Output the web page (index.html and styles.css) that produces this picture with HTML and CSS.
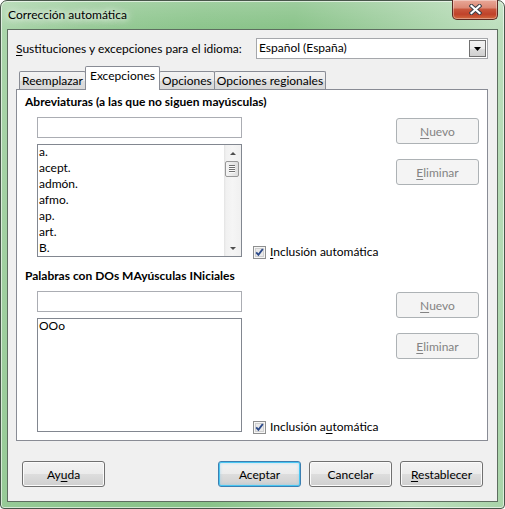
FILE: index.html
```html
<!DOCTYPE html>
<html>
<head>
    <title>Corrección automática</title>
    <link rel="stylesheet" href="styles.css">
</head>
<body>
    <div class="window">
        <div class="titlebar">
            <span class="title">Corrección automática</span>
            <button class="close-btn">
                <svg width="13" height="11" viewBox="0 0 13 11">
                    <path d="M2.5 2 L10.5 9 M10.5 2 L2.5 9" stroke="#3b4048" stroke-width="4.2" stroke-linecap="square" fill="none"/>
                    <path d="M2.5 2 L10.5 9 M10.5 2 L2.5 9" stroke="#fff" stroke-width="2.2" stroke-linecap="square" fill="none"/>
                </svg>
            </button>
        </div>

        <div class="client">
            <div class="lang-row">
                <label class="lang-label"><u>S</u>ustituciones y excepciones para el idioma:</label>
                <div class="combo">
                    <span class="combo-text">Español (España)</span>
                    <span class="combo-btn">
                        <svg width="7" height="4" viewBox="0 0 7 4"><path d="M0 0 H7 L3.5 4 Z" fill="#000"/></svg>
                    </span>
                </div>
            </div>

            <div class="tabs">
                <div class="tab">Reemplazar</div>
                <div class="tab active">Excepciones</div>
                <div class="tab">Opciones</div>
                <div class="tab">Opciones regionales</div>
            </div>

            <div class="panel">
                <section class="group">
                    <h2 class="group-title">Abreviaturas (a las que no siguen mayúsculas)</h2>
                    <div class="group-body">
                        <div class="field"></div>
                        <div class="listbox short">
                            <ul class="items">
                                <li>a.</li>
                                <li>acept.</li>
                                <li>admón.</li>
                                <li>afmo.</li>
                                <li>ap.</li>
                                <li>art.</li>
                                <li>B.</li>
                            </ul>
                            <div class="vscroll">
                                <span class="sb-arrow sb-up"></span>
                                <span class="sb-thumb"></span>
                                <span class="sb-track"></span>
                                <span class="sb-arrow sb-down"></span>
                            </div>
                        </div>
                        <label class="check">
                            <svg width="13" height="13" viewBox="0 0 13 13">
                                <rect x="0.5" y="0.5" width="12" height="12" fill="#f6f6f6" stroke="#8e8f8f"/>
                                <rect x="2.5" y="2.5" width="8" height="8" fill="#e9e9e9" stroke="#cfcfcf"/>
                                <path d="M3.2 6.4 L5.4 8.8 L9.8 3" stroke="#2c4a8a" stroke-width="1.9" fill="none"/>
                            </svg>
                            <span><u>I</u>nclusión automática</span>
                        </label>
                        <div class="side-btns">
                            <button class="btn" disabled><u>N</u>uevo</button>
                            <button class="btn" disabled><u>E</u>liminar</button>
                        </div>
                    </div>
                </section>

                <section class="group second">
                    <h2 class="group-title">Palabras con DOs MAyúsculas INiciales</h2>
                    <div class="group-body">
                        <div class="field"></div>
                        <div class="listbox tall">
                            <ul class="items">
                                <li>OOo</li>
                            </ul>
                        </div>
                        <label class="check">
                            <svg width="13" height="13" viewBox="0 0 13 13">
                                <rect x="0.5" y="0.5" width="12" height="12" fill="#f6f6f6" stroke="#8e8f8f"/>
                                <rect x="2.5" y="2.5" width="8" height="8" fill="#e9e9e9" stroke="#cfcfcf"/>
                                <path d="M3.2 6.4 L5.4 8.8 L9.8 3" stroke="#2c4a8a" stroke-width="1.9" fill="none"/>
                            </svg>
                            <span>Inclusión a<u>u</u>tomática</span>
                        </label>
                        <div class="side-btns">
                            <button class="btn" disabled><u>N</u>uevo</button>
                            <button class="btn" disabled><u>E</u>liminar</button>
                        </div>
                    </div>
                </section>
            </div>

            <div class="footer">
                <button class="btn help">Ay<u>u</u>da</button>
                <button class="btn default">Aceptar</button>
                <button class="btn">Cancelar</button>
                <button class="btn"><u>R</u>establecer</button>
            </div>
        </div>
    </div>
</body>
</html>
```

FILE: styles.css
```css
* {
    box-sizing: border-box;
}

body {
    margin: 0;
    font-family: Lato, "Noto Sans", sans-serif;
    font-size: 12px;
    color: #000;
    background: #fff;
}

u {
    text-decoration-thickness: 1px;
    text-underline-offset: 2px;
}

/* aero frame */
.window {
    width: 505px;
    height: 509px;
    display: flex;
    flex-direction: column;
    padding: 0 6px 6px 6px;
    border: 1px solid #48564a;
    border-radius: 7px 7px 4px 4px;
    background:
        linear-gradient(180deg, rgba(255, 255, 255, 0.18) 0, rgba(255, 255, 255, 0) 28px),
        linear-gradient(100deg, #acd6ac 0%, #96ca96 16%, #8cc58c 34%, #89c389 50%, #a1cfa1 66%, #bddfbd 84%, #a9d4a9 100%);
    box-shadow: inset 0 0 0 1px rgba(255, 255, 255, 0.6);
}

.titlebar {
    height: 28px;
    display: flex;
    justify-content: space-between;
    align-items: flex-start;
}

.title {
    margin: 6px 0 0 1px;
    line-height: 16px;
    text-shadow: 0 0 6px #fff, 0 0 10px rgba(255, 255, 255, 0.9), 0 0 16px rgba(255, 255, 255, 0.7);
}

.close-btn {
    width: 46px;
    height: 20px;
    margin-top: -1px;
    padding: 0;
    display: flex;
    align-items: center;
    justify-content: center;
    border: 1px solid #5b2a22;
    border-top: none;
    border-radius: 0 0 5px 5px;
    background: linear-gradient(180deg, #e9a898 0%, #dc8a76 40%, #c8553b 50%, #c0422a 75%, #d2693e 100%);
    box-shadow: inset 0 0 0 1px rgba(255, 255, 255, 0.35);
}

/* dialog body */
.client {
    flex: 1;
    display: flex;
    flex-direction: column;
    padding: 8px 9px 14px 8px;
    border: 1px solid #5e6e60;
    background: #f0f0f0;
}

.lang-row {
    height: 21px;
    display: flex;
    justify-content: space-between;
    align-items: center;
    white-space: nowrap;
}

.combo {
    width: 232px;
    height: 21px;
    display: flex;
    align-items: stretch;
    border: 1px solid #a5a7ab;
    background: #fff;
}

.combo-text {
    flex: 1;
    padding-left: 2px;
    line-height: 18px;
}

.combo-btn {
    width: 17px;
    margin: 1px;
    display: flex;
    align-items: center;
    justify-content: center;
    border: 1px solid #707070;
    background: linear-gradient(180deg, #f2f2f2 0%, #ebebeb 50%, #dddddd 51%, #d0d0d0 100%);
}

/* tab strip */
.tabs {
    height: 23px;
    margin-top: 7px;
    padding-left: 3px;
    display: flex;
    align-items: flex-end;
}

.tab {
    height: 18px;
    padding: 1px 2px 0;
    line-height: 16px;
    border: 1px solid #898c95;
    border-bottom: none;
    border-radius: 2px 2px 0 0;
    background: linear-gradient(180deg, #f3f3f3 0%, #ebebeb 50%, #dddddd 51%, #d8d8d8 100%);
    white-space: nowrap;
}

.tab + .tab {
    margin-left: -1px;
}

.tab.active {
    position: relative;
    z-index: 1;
    height: 24px;
    margin-bottom: -1px;
    padding: 1px 4px 0;
    background: #fff;
}

.panel {
    flex: 1;
    padding: 4px 8px 0 8px;
    border: 1px solid #898c95;
    background: #fff;
}

.group-title {
    margin: 0 0 7px;
    font-size: 12px;
    font-weight: bold;
    line-height: 16px;
}

.group.second {
    margin-top: 11px;
}

.group-body {
    margin-left: 12px;
    display: grid;
    grid-template-columns: 205px 1fr 83px;
    column-gap: 11px;
    row-gap: 6px;
}

.field {
    grid-column: 1;
    grid-row: 1;
    height: 21px;
    border: 1px solid #abadb3;
    background: #fff;
}

.listbox {
    grid-column: 1;
    grid-row: 2;
    display: flex;
    border: 1px solid #828790;
    overflow: hidden;
}

.listbox.short {
    height: 113px;
}

.listbox.tall {
    height: 114px;
}

.items {
    flex: 1;
    margin: -1px 0 0;
    padding: 0 0 0 1px;
    list-style: none;
    line-height: 16px;
}

/* scrollbar */
.vscroll {
    width: 17px;
    display: flex;
    flex-direction: column;
    background: linear-gradient(90deg, #e3e3e3 0, #f1f1f1 2px, #f5f5f5 50%, #f0f0f0 100%);
}

.sb-arrow {
    height: 16px;
    display: flex;
    justify-content: center;
    align-items: center;
}

.sb-up::before,
.sb-down::before {
    content: "";
    border-left: 3px solid transparent;
    border-right: 3px solid transparent;
}

.sb-up::before {
    border-bottom: 3px solid #4f4f4f;
}

.sb-down::before {
    border-top: 3px solid #4f4f4f;
}

.sb-thumb {
    position: relative;
    height: 16px;
    margin: 0 2px 0 1px;
    border: 1px solid #989898;
    border-radius: 2px;
    background: linear-gradient(90deg, #f4f4f4 0%, #e9e9e9 50%, #dedede 100%);
}

.sb-thumb::after {
    content: "";
    position: absolute;
    left: 3px;
    right: 3px;
    top: 3px;
    height: 8px;
    background: repeating-linear-gradient(180deg, #707070 0 1px, #fafafa 1px 2px);
}

.sb-track {
    flex: 1;
}

.check {
    grid-column: 2;
    grid-row: 2;
    align-self: end;
    margin-bottom: -3px;
    display: flex;
    align-items: center;
    gap: 4px;
    line-height: 16px;
    white-space: nowrap;
}

.side-btns {
    grid-column: 3;
    grid-row: 1 / span 2;
    padding-top: 1px;
    display: flex;
    flex-direction: column;
    gap: 15px;
}

/* push buttons */
.btn {
    width: 83px;
    height: 26px;
    padding: 0;
    font: inherit;
    color: #000;
    border: 1px solid #707070;
    border-radius: 3px;
    background: linear-gradient(180deg, #f2f2f2 0%, #ebebeb 50%, #dddddd 51%, #cfcfcf 100%);
    box-shadow: inset 0 0 0 1px #fbfbfb;
}

.btn:disabled {
    color: #838383;
    border-color: #adb2b5;
    background: #f4f4f4;
    box-shadow: none;
}

.btn.default {
    border-color: #3c7fb1;
    box-shadow: inset 0 0 0 1px #48c6f2, inset 0 0 3px 1px rgba(100, 200, 245, 0.45);
}

.footer {
    margin-top: 20px;
    padding: 0 5px 0 6px;
    display: flex;
    gap: 8px;
}

.footer .help {
    margin-right: auto;
}
```
